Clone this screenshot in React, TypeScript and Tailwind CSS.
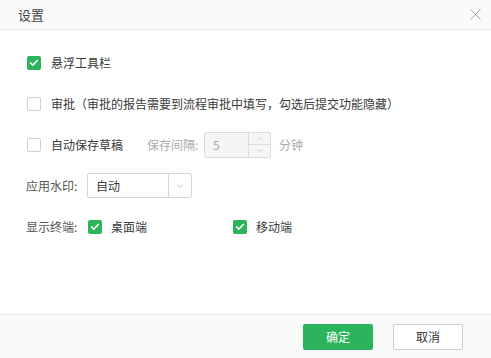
import { Check, ChevronDown, ChevronUp, X } from "lucide-react"

function Box({ checked }: { checked?: boolean }) {
    return checked ? (
        <span className="flex h-[14px] w-[14px] shrink-0 items-center justify-center rounded-[2px] bg-[#2bb45c]">
            <Check className="h-[10px] w-[10px] text-white" strokeWidth={4} />
        </span>
    ) : (
        <span className="h-[14px] w-[14px] shrink-0 rounded-[2px] border border-[#d0d0d0] bg-white" />
    )
}

export default function App() {
    return (
        <div
            className="flex h-[358px] w-[491px] flex-col bg-white text-[12px] text-[#3a3a3a]"
            style={{ fontFamily: '"Noto Sans CJK SC", "Noto Sans", sans-serif' }}
        >
            {/* Header */}
            <div className="flex h-[30px] shrink-0 items-center justify-between border-b border-[#e8e8e8] bg-[#fafafa] pl-[18px] pr-[6px]">
                <span className="text-[13px] text-[#444]">设置</span>
                <X className="h-[19px] w-[19px] text-[#999]" strokeWidth={1.1} />
            </div>

            {/* Body */}
            <div className="flex-1 pl-[27px] pt-[12px]">
                <div className="flex h-[41px] items-center gap-[10px]">
                    <Box checked />
                    <span>悬浮工具栏</span>
                </div>
                <div className="flex h-[41px] items-center gap-[10px]">
                    <Box />
                    <span>审批（审批的报告需要到流程审批中填写，勾选后提交功能隐藏）</span>
                </div>
                <div className="flex h-[41px] items-center">
                    <Box />
                    <span className="ml-[10px] w-[96px]">自动保存草稿</span>
                    <span className="w-[57px] text-[#aaa]">保存间隔:</span>
                    <div className="flex h-[26px] w-[67px] rounded-[2px] border border-[#dcdcdc] bg-[#f5f5f5]">
                        <span className="flex flex-1 items-center pl-[8px] text-[#aaa]">5</span>
                        <div className="flex w-[22px] flex-col border-l border-[#dcdcdc]">
                            <span className="flex flex-1 items-center justify-center border-b border-[#dcdcdc]">
                                <ChevronUp className="h-[9px] w-[9px] text-[#bbb]" />
                            </span>
                            <span className="flex flex-1 items-center justify-center">
                                <ChevronDown className="h-[9px] w-[9px] text-[#bbb]" />
                            </span>
                        </div>
                    </div>
                    <span className="ml-[8px] text-[#aaa]">分钟</span>
                </div>
                <div className="-ml-[1px] flex h-[41px] items-center">
                    <span className="w-[61px] text-[#555]">应用水印:</span>
                    <div className="flex h-[25px] w-[105px] rounded-[2px] border border-[#d6d6d6] bg-white">
                        <span className="flex flex-1 items-center pl-[8px]">自动</span>
                        <span className="flex w-[23px] items-center justify-center border-l border-[#d6d6d6]">
                            <ChevronDown className="h-[10px] w-[10px] text-[#bbb]" />
                        </span>
                    </div>
                </div>
                <div className="-ml-[1px] flex h-[41px] items-center">
                    <span className="w-[62px] text-[#555]">显示终端:</span>
                    <div className="flex w-[145px] items-center gap-[9px]">
                        <Box checked />
                        <span>桌面端</span>
                    </div>
                    <div className="flex items-center gap-[9px]">
                        <Box checked />
                        <span>移动端</span>
                    </div>
                </div>
            </div>

            {/* Footer */}
            <div className="flex h-[44px] shrink-0 items-center justify-end gap-[20px] border-t border-[#e8e8e8] bg-[#fafafa] pr-[28px]">
                <button className="flex h-[26px] w-[70px] items-center justify-center rounded-[2px] bg-[#2bb45c] text-white">
                    确定
                </button>
                <button className="flex h-[26px] w-[70px] items-center justify-center rounded-[2px] border border-[#cfcfcf] bg-white text-[#333]">
                    取消
                </button>
            </div>
        </div>
    )
}
